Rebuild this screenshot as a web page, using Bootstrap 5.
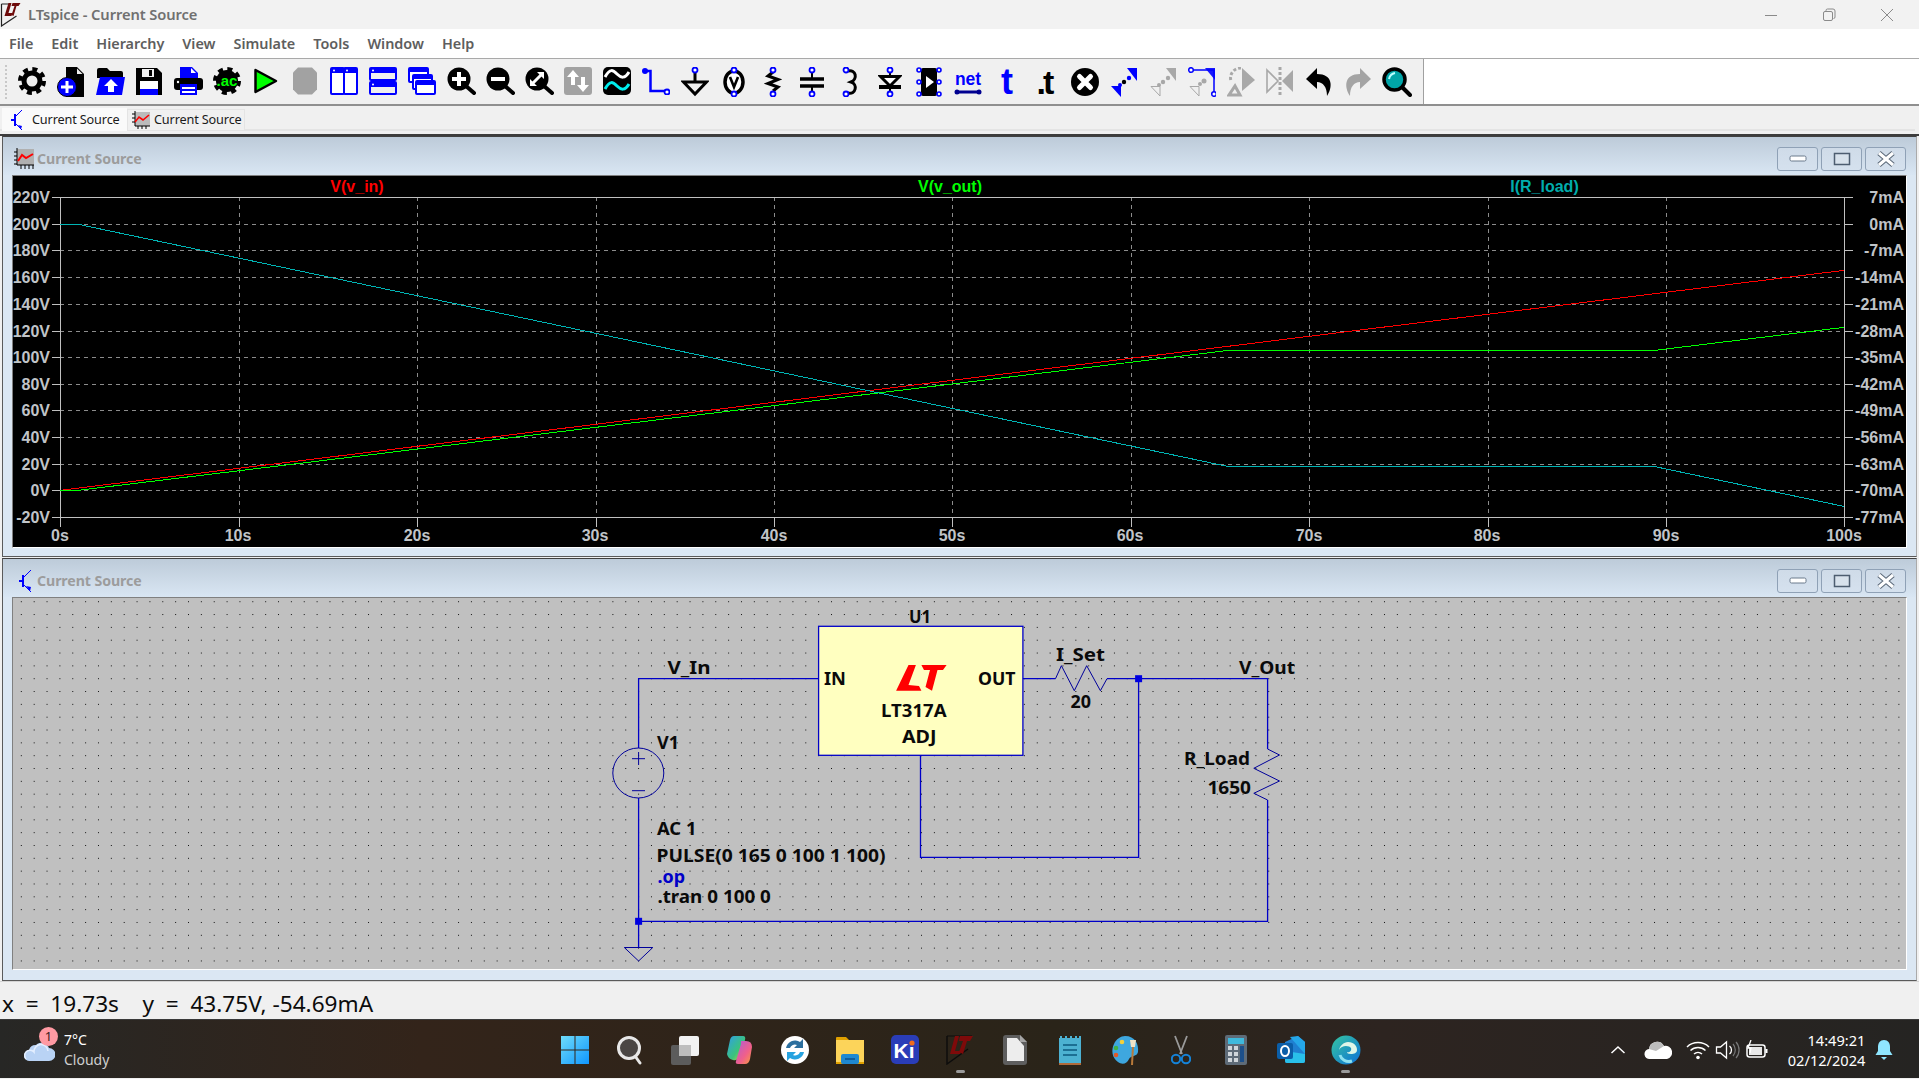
<!DOCTYPE html>
<html lang="en"><head><meta charset="utf-8"><title>LTspice - Current Source</title>
<link href="https://cdn.jsdelivr.net/npm/bootstrap@5.3.0/dist/css/bootstrap.min.css" rel="stylesheet">
<style>
html,body{height:100%;overflow:hidden;margin:0}
body{font-family:"Noto Sans","Liberation Sans",sans-serif;background:#f0f0f0}
.app{width:1919px;height:1079px}
.titlebar{height:29px;background:#f2f2f2;color:#707070;font-size:14.7px;font-weight:600;padding-right:3px}
.titlebar .title{margin-left:7px;letter-spacing:-.1px}
.winctl{width:58px;height:29px}
.menubar{height:30px;background:#fff;border-bottom:1px solid #a9a9a9;padding-left:9px;gap:18px;font-size:14.4px;font-weight:600;color:#5e5e5e}
.toolbar{height:47px;border-bottom:2px solid #8f8f8f;background:#fff}
.tb-inner{width:1424px;height:45px;background:#f0f0f0;border-right:1px solid #a0a0a0;padding-left:12.5px;position:relative}
.grip{width:3px;height:34px;margin-left:-8px;margin-right:5px;border-left:2px dotted #c8c8c8}
.slot{width:39px;height:45px;padding-top:8px;display:flex;justify-content:center;flex:none}
.slot svg{display:block}
.slot svg.tall{margin-top:-6px}
.tabs{height:30px;background:#f0f0f0;border-bottom:2px solid #3c3c3c;padding:2px 0 0 2px;position:relative}
.tabs::after{content:"";position:absolute;left:0;right:4px;bottom:3px;height:2px;background:#e4e4e4}
.tab1,.tab2{font-size:12.7px;color:#1b1b1b;letter-spacing:-.15px;z-index:1;white-space:nowrap}
.tab1{width:125px;background:#fafafa;height:23px}
.tab2{width:118px;background:#f0f0f0;border:1px solid #e4e4e4;margin-top:1px;height:22px}
.mdi{height:845px;background:#f0f0f0;padding:0 2px;gap:1px}
.child{border:1px solid #5a5a5a;border-top-color:#404040;border-right-color:#aaa;background:#dbe7f3}
.child.c1{height:421px}.child.c2{height:423px}
.ctitle{height:38px;background:linear-gradient(180deg,#bdcbd9,#d9e6f3);padding:5px 10px 0 11px;color:#9c9c9c;font-size:14.2px;font-weight:700}
.ctitle .t{margin-left:3px;letter-spacing:-.1px}
.ctitle .t2{margin-left:3px}
.cbtn{width:41px;height:24px;border:1px solid #8fa1b6;border-radius:3px;background:linear-gradient(180deg,#cfdbe8,#d5e1ee);margin-left:3px;flex:none}
.canvasbox{margin-left:9px;margin-right:9px;border-top:1px solid #808080;border-left:1px solid #808080;border-bottom:1px solid #fff;border-right:1px solid #fff}
.canvasbox svg{display:block}
.status{height:38px;background:#f0f0f0;border-top:1px solid #d4d4d4;font-size:22.6px;color:#0c0c0c;padding:6px 0 0 2px;white-space:pre}
.taskbar{height:59px;background:linear-gradient(90deg,#272725,#33241a 22%,#2a2419 55%,#2d2420 72%,#252422);border-top:1px solid #3a3a3a;color:#fff;font-size:13.5px;padding-top:2px}
.wx{width:547px;padding-left:24px;position:relative;flex:none}
.wx .badge1{position:absolute;left:39px;top:-3px;width:19px;height:19px;background:#ff9aa3;color:#3a2020;font-size:13px;font-weight:400;padding:0;line-height:19px}
.wxt{margin-left:9px;line-height:20px;font-size:14px}
.wxt small{display:block;font-size:14px;color:#cfcfcf}
.tk{width:55.1px;display:flex;flex-direction:column;align-items:center;position:relative;flex:none}
.tk .dot{position:absolute;bottom:-8px;width:9px;height:3px;border-radius:2px;background:#9a9a9a}
.tray{margin-left:237px}
.tray .g1{margin-left:18px}.tray .g2{margin-left:13px}.tray .g3{margin-left:4px}.tray .g4{margin-left:4px}
.clock{width:90px;text-align:right;line-height:20px;font-size:14.6px;margin-left:6px;margin-right:10px;white-space:nowrap}
.trace{font:700 16px "Liberation Sans",sans-serif}
.ax{font:700 16px "Liberation Sans",sans-serif;fill:#c0c4c8}
.sch{font:700 17px "Noto Sans","DejaVu Sans",sans-serif;fill:#0a0a0a}
.wire{fill:none;stroke:#0000c8;stroke-width:1.3}
.thin{fill:none;stroke:#00009a;stroke-width:1}
</style></head><body>
<div class="app d-flex flex-column">

<div class="titlebar d-flex align-items-center">
<svg class="ms-0" width="21" height="25" viewBox="0 0 20 25"><path d="M1 2V24L16 14M1 2l9 0" fill="none" stroke="#222" stroke-width="1.2"/><polygon points="8,1 11,1 8,11 12,11 11,14 4,14" fill="#6e0b0b"/><polygon points="12,1 20,1 18,4 16,4 13,14 11,13 14,4 11,4" fill="#6e0b0b"/></svg>
<span class="title">LTspice - Current Source</span>
<div class="ms-auto d-flex">
<div class="winctl d-flex align-items-center justify-content-center"><svg width="14" height="14"><path d="M1 7.5H13" stroke="#8a8a8a"/></svg></div>
<div class="winctl d-flex align-items-center justify-content-center"><svg width="14" height="14"><rect x="1.5" y="3.5" width="9" height="9" rx="1.5" fill="none" stroke="#8a8a8a"/><path d="M4 3V2.5a1.5 1.5 0 0 1 1.500-1.500H11a2 2 0 0 1 2 2V9a1.500 1.500 0 0 1-1.500 1.500" fill="none" stroke="#8a8a8a"/></svg></div>
<div class="winctl d-flex align-items-center justify-content-center"><svg width="14" height="14"><path d="M1 1L13 13M13 1L1 13" stroke="#8a8a8a"/></svg></div>
</div></div>

<nav class="menubar d-flex align-items-center"><span>File</span><span>Edit</span><span>Hierarchy</span><span>View</span><span>Simulate</span><span>Tools</span><span>Window</span><span>Help</span></nav>

<div class="toolbar"><div class="tb-inner d-flex">
<div class="slot" style="width:0;padding-top:6px"><div class="grip"></div></div>
<div class="slot"><svg width="28" height="28" viewBox="0 0 28 28"><circle cx="14" cy="14" r="10.500"/><circle cx="14" cy="14" r="12" fill="none" stroke="#000" stroke-width="4" stroke-dasharray="5 4.420"/><circle cx="14" cy="14" r="5.500" fill="#f0f0f0"/></svg></div>
<div class="slot"><svg width="28" height="30" viewBox="0 0 28 30"><path d="M9 0h11l7 7v23H9z"/><path d="M20 1.500l5.500 5.500H20z" fill="#f0f0f0"/><circle cx="10" cy="20" r="9.500" fill="#00f" stroke="#000"/><path d="M10 14v12M4 20h12" stroke="#fff" stroke-width="3"/></svg></div>
<div class="slot"><svg width="29" height="28" viewBox="0 0 29 28"><path d="M1 3q0-2 2-2h8l3 3h11q2 0 2 2v5H1z"/><path d="M4 10h25l-3 18H0z" fill="#00f"/><path d="M1 8h25" stroke="#000" stroke-width="2"/><path d="M15 12l7 7h-4v6h-6v-6H8z" fill="#fff"/></svg></div>
<div class="slot"><svg width="28" height="28" viewBox="0 0 28 28"><path d="M1 1h21l5 5v22H1z"/><rect x="7" y="2" width="12" height="8" fill="#f0f0f0"/><rect x="14" y="3" width="3" height="6"/><rect x="5" y="14" width="18" height="8" fill="#fff"/><rect x="5" y="22" width="18" height="6" fill="#00f"/></svg></div>
<div class="slot"><svg width="29" height="28" viewBox="0 0 29 28"><path d="M6 0h12l6 6v8H6z" fill="#00f"/><path d="M17 1l5 5h-5z" fill="#fff"/><rect x="0" y="11" width="29" height="12" rx="3"/><circle cx="4" cy="15" r="1.200" fill="#fff"/><rect x="6" y="17" width="17" height="11" fill="#00f"/><path d="M8 21h13M8 25h13" stroke="#fff" stroke-width="1.800"/></svg></div>
<div class="slot"><svg width="28" height="28" viewBox="0 0 28 28"><circle cx="14" cy="14" r="11"/><circle cx="14" cy="14" r="12" fill="none" stroke="#000" stroke-width="4" stroke-dasharray="5 4.420"/><text x="14" y="19" text-anchor="middle" font-family="Liberation Sans" font-weight="700" font-size="15" fill="#0f0">.ac</text></svg></div>
<div class="slot"><svg width="26" height="28" viewBox="0 0 26 28"><path d="M2.500 3L23 14L2.500 25z" fill="#0f0" stroke="#000" stroke-width="2.500" stroke-linejoin="round"/></svg></div>
<div class="slot"><svg width="26" height="28" viewBox="0 0 26 28"><path d="M6 0.500h14l5 5v17l-5 5H6l-5-5v-17z" fill="#a2a2a2"/></svg></div>
<div class="slot"><svg width="28" height="28" viewBox="0 0 28 28"><rect x="1" y="1" width="13" height="26" rx="1" fill="#fff" stroke="#00f" stroke-width="2"/><rect x="14" y="1" width="13" height="26" rx="1" fill="#fff" stroke="#00f" stroke-width="2"/><rect x="1" y="1" width="26" height="5" fill="#00f"/><circle cx="4" cy="3.500" r="1" fill="#fff"/><circle cx="17" cy="3.500" r="1" fill="#fff"/></svg></div>
<div class="slot"><svg width="28" height="28" viewBox="0 0 28 28"><rect x="1" y="1" width="26" height="12" rx="1" fill="#f0f0f0" stroke="#00f" stroke-width="2"/><rect x="1" y="15" width="26" height="12" rx="1" fill="#f0f0f0" stroke="#00f" stroke-width="2"/><rect x="1" y="1" width="26" height="5" fill="#00f"/><rect x="1" y="15" width="26" height="5" fill="#00f"/><circle cx="4" cy="3.500" r="1" fill="#fff"/><circle cx="4" cy="17.500" r="1" fill="#fff"/></svg></div>
<div class="slot"><svg width="28" height="28" viewBox="0 0 28 28"><rect x="1" y="1" width="19" height="14" rx="1" fill="#fff" stroke="#00f" stroke-width="2"/><rect x="1" y="1" width="19" height="4" fill="#00f"/><rect x="5" y="8" width="19" height="14" rx="1" fill="#fff" stroke="#00f" stroke-width="2"/><rect x="5" y="8" width="19" height="4" fill="#00f"/><rect x="8" y="14" width="19" height="13" rx="1" fill="#fff" stroke="#00f" stroke-width="2"/><rect x="8" y="14" width="19" height="4" fill="#00f"/></svg></div>
<div class="slot"><svg width="29" height="28" viewBox="0 0 29 28"><path d="M19 19l8 7" stroke="#000" stroke-width="4" stroke-linecap="round"/><circle cx="12" cy="12" r="11.500"/><path d="M12 5v14M5 12h14" stroke="#fff" stroke-width="4"/></svg></div>
<div class="slot"><svg width="29" height="28" viewBox="0 0 29 28"><path d="M19 19l8 7" stroke="#000" stroke-width="4" stroke-linecap="round"/><circle cx="12" cy="12" r="11.500"/><path d="M5 12h14" stroke="#fff" stroke-width="4"/></svg></div>
<div class="slot"><svg width="29" height="28" viewBox="0 0 29 28"><path d="M19 19l8 7" stroke="#000" stroke-width="4" stroke-linecap="round"/><circle cx="12" cy="12" r="11.500"/><path d="M7 17L17 7" stroke="#fff" stroke-width="3"/><path d="M12 5h7v7zM5 12v7h7z" fill="#fff"/></svg></div>
<div class="slot"><svg width="28" height="28" viewBox="0 0 28 28"><rect width="28" height="28" rx="3" fill="#a2a2a2"/><path d="M9 3l6 7h-4v8H7v-8H3zM19 25l-6-7h4v-8h4v8h4z" fill="#fff"/></svg></div>
<div class="slot"><svg width="28" height="28" viewBox="0 0 28 28"><rect width="28" height="28" rx="5"/><path d="M2 10C7 1 10 3 14 7S22 12 26 5" fill="none" stroke="#fff" stroke-width="3"/><path d="M2 22C7 13 10 15 14 19S22 24 26 17" fill="none" stroke="#0ee" stroke-width="3"/></svg></div>
<div class="slot"><svg width="28" height="28" viewBox="0 0 28 28"><path d="M3 4H8.500V24H24" fill="none" stroke="#00f" stroke-width="2.500"/><circle cx="3" cy="4" r="3" fill="#00f"/><circle cx="25" cy="25" r="2.500" fill="#fff" stroke="#00f" stroke-width="1.800"/></svg></div>
<div class="slot"><svg width="28" height="30" viewBox="0 0 28 30"><path d="M14 5V15" stroke="#000" stroke-width="3"/><path d="M2.500 15H25.500L14 27z" fill="none" stroke="#000" stroke-width="3"/><circle cx="14" cy="3" r="2.500" fill="#fff" stroke="#00f" stroke-width="1.800"/></svg></div>
<div class="slot"><svg width="24" height="30" viewBox="0 0 24 30"><ellipse cx="12" cy="15" rx="9" ry="11" fill="#fff" stroke="#000" stroke-width="3.500"/><path d="M8 10l4 10l4-10" fill="none" stroke="#000" stroke-width="2.600"/><circle cx="12" cy="3" r="2.500" fill="#fff" stroke="#00f" stroke-width="1.800"/><circle cx="12" cy="27" r="2.500" fill="#fff" stroke="#00f" stroke-width="1.800"/></svg></div>
<div class="slot"><svg width="18" height="30" viewBox="0 0 18 30"><path d="M9 5L4 9L14 12.500L4 16.500L14 20L9 24" fill="none" stroke="#000" stroke-width="3"/><circle cx="9" cy="3" r="2.500" fill="#fff" stroke="#00f" stroke-width="1.800"/><circle cx="9" cy="27" r="2.500" fill="#fff" stroke="#00f" stroke-width="1.800"/></svg></div>
<div class="slot"><svg width="28" height="30" viewBox="0 0 28 30"><path d="M2 12H26M2 19H26" stroke="#000" stroke-width="3.500"/><path d="M14 5V12M14 19V25" stroke="#000" stroke-width="2"/><circle cx="14" cy="3" r="2.500" fill="#fff" stroke="#00f" stroke-width="1.800"/><circle cx="14" cy="27" r="2.500" fill="#fff" stroke="#00f" stroke-width="1.800"/></svg></div>
<div class="slot"><svg width="18" height="30" viewBox="0 0 18 30"><path d="M6 4C14 2 16 12 9 15C16 17 14 28 6 26" fill="none" stroke="#000" stroke-width="3"/><circle cx="4" cy="3" r="2.500" fill="#fff" stroke="#00f" stroke-width="1.800"/><circle cx="4" cy="27" r="2.500" fill="#fff" stroke="#00f" stroke-width="1.800"/></svg></div>
<div class="slot"><svg width="24" height="30" viewBox="0 0 24 30"><path d="M12 5V10M12 20V25" stroke="#000" stroke-width="2"/><path d="M2.500 9.500H21.500L12 19z" fill="#fff" stroke="#000" stroke-width="3"/><path d="M1 20H23" stroke="#000" stroke-width="4"/><circle cx="12" cy="3" r="2.500" fill="#fff" stroke="#00f" stroke-width="1.800"/><circle cx="12" cy="27" r="2.500" fill="#fff" stroke="#00f" stroke-width="1.800"/></svg></div>
<div class="slot"><svg width="26" height="30" viewBox="0 0 26 30"><rect x="5" y="1" width="16" height="28" rx="2"/><path d="M10 9L18 15L10 21z" fill="#fff"/><g fill="none" stroke="#00f" stroke-width="1.600"><circle cx="3" cy="3" r="2"/><circle cx="3" cy="15" r="2"/><circle cx="3" cy="27" r="2"/><circle cx="23" cy="3" r="2"/><circle cx="23" cy="15" r="2"/><circle cx="23" cy="27" r="2"/></g></svg></div>
<div class="slot"><svg width="28" height="30" viewBox="0 0 28 30"><text x="14" y="18" text-anchor="middle" font-family="Liberation Sans" font-weight="700" font-size="17.500" fill="#00f">net</text><path d="M3 25H25" stroke="#000090" stroke-width="3"/><circle cx="3" cy="25" r="2.500" fill="#000090"/><circle cx="25" cy="25" r="2.500" fill="#000090"/></svg></div>
<div class="slot"><svg class="tall" width="24" height="42" viewBox="0 0 24 42"><text x="12" y="33" text-anchor="middle" font-family="Liberation Sans" font-weight="700" font-size="36" fill="#00f">t</text></svg></div>
<div class="slot"><svg class="tall" width="30" height="42" viewBox="0 0 30 42"><text x="13" y="33" text-anchor="middle" font-family="Liberation Sans" font-weight="700" font-size="34" letter-spacing="-3" fill="#000">.t</text></svg></div>
<div class="slot"><svg width="30" height="30" viewBox="0 0 30 30"><circle cx="15" cy="15" r="14"/><path d="M9.500 9.500L20.500 20.500M20.500 9.500L9.500 20.500" stroke="#fff" stroke-width="5" stroke-linecap="round"/></svg></div>
<div class="slot"><svg width="28" height="30" viewBox="0 0 28 30"><path d="M27 1V14L17 1z" fill="#00f"/><path d="M1 19H11V30z" fill="#00f"/><circle cx="19" cy="11" r="2.200" fill="#00f"/><circle cx="14" cy="15" r="2.200"/><circle cx="10" cy="18" r="2" fill="#00f"/></svg></div>
<div class="slot"><svg width="28" height="30" viewBox="0 0 28 30"><path d="M27 1V14L17 1z" fill="#a8a8a8"/><path d="M2 19.500H11V29z" fill="none" stroke="#a8a8a8"/><circle cx="19" cy="11" r="2.200" fill="#a8a8a8"/><circle cx="14" cy="15" r="2.200" fill="#a8a8a8"/><circle cx="10" cy="18" r="2" fill="#a8a8a8"/></svg></div>
<div class="slot"><svg width="28" height="30" viewBox="0 0 28 30"><path d="M3 3H26V27" fill="none" stroke="#00f" stroke-width="1.500"/><path d="M27 1V13L17 1z" fill="#00f" opacity=".9"/><circle cx="3" cy="3" r="2.300" fill="#fff" stroke="#00f" stroke-width="1.500"/><circle cx="26" cy="27" r="2.300" fill="#fff" stroke="#00f" stroke-width="1.500"/><path d="M2 19.500H11V29z" fill="none" stroke="#a8a8a8"/><circle cx="16" cy="14" r="2.500" fill="#a8a8a8"/><circle cx="12" cy="17" r="2" fill="#a8a8a8"/></svg></div>
<div class="slot"><svg width="28" height="30" viewBox="0 0 28 30"><path d="M14 1A10 10 0 0 0 4 14" fill="none" stroke="#a8a8a8" stroke-width="3" stroke-dasharray="3 2"/><path d="M15 1L28 13L15 24z" fill="#a8a8a8"/><path d="M2 28L13 28L8 19z" fill="none" stroke="#a8a8a8" stroke-width="3"/></svg></div>
<div class="slot"><svg width="28" height="28" viewBox="0 0 28 28"><path d="M1 3L12 14L1 25z" fill="none" stroke="#a8a8a8" stroke-width="1.600"/><path d="M27 3L16 14L27 25z" fill="#a8a8a8"/><path d="M14 0V28" stroke="#a8a8a8" stroke-width="3" stroke-dasharray="3 2"/></svg></div>
<div class="slot"><svg width="28" height="30" viewBox="0 0 28 30"><path d="M12 1L1 12L12 22V15C18 15 22 20 22 29C28 20 28 7 12 7z"/></svg></div>
<div class="slot"><svg width="28" height="30" viewBox="0 0 28 30"><path d="M16 1L27 12L16 22V15C10 15 6 20 6 29C0 20 0 7 16 7z" fill="#a4a4a4"/></svg></div>
<div class="slot"><svg width="30" height="30" viewBox="0 0 30 30"><path d="M20 20l8 8" stroke="#000" stroke-width="4" stroke-linecap="round"/><circle cx="12.500" cy="12.500" r="10.500" fill="#00a5a8" stroke="#000" stroke-width="3.500"/><path d="M7 12q1-5 6-6" fill="none" stroke="#b8ffff" stroke-width="2"/></svg></div>
</div></div>

<div class="tabs d-flex">
<div class="tab1 d-flex align-items-center"><svg class="ms-2 me-2" width="14" height="22" viewBox="0 0 14 22"><path d="M1 11H5M5 5V17" stroke="#00f" stroke-width="2"/><path d="M5 8L12 1M5 14L12 21" stroke="#00f"/><path d="M8 16l4 1-1 3z" fill="#00f"/></svg>Current Source</div>
<div class="tab2 d-flex align-items-center"><svg class="ms-1" width="18" height="19" viewBox="0 0 18 19"><rect x="3" y="1" width="15" height="14" fill="#bbb"/><path d="M3 0V15H18M0 3h3M0 7h3M0 11h3M6 15v3M10 15v3M14 15v3" stroke="#000" fill="none"/><path d="M3 11L7 6L11 9L17 4" stroke="#f00" stroke-width="1.600" fill="none"/></svg><span class="ms-1">Current Source</span></div>
</div>

<div class="mdi d-flex flex-column">
<section class="child c1 d-flex flex-column">
<div class="ctitle d-flex align-items-center"><svg width="20" height="21" viewBox="0 0 20 21"><rect x="3" y="1" width="17" height="16" fill="#b0b0b0"/><path d="M3 0V17H20M0 4h3M0 8h3M0 12h3M0 16h3M7 17v4M11 17v4M15 17v4M19 17v4" stroke="#000" fill="none"/><path d="M4 13L8 7L12 10L19 6" stroke="#f00" stroke-width="2" fill="none"/></svg>
<span class="t">Current Source</span>
<div class="ms-auto d-flex"><div class="cbtn d-flex align-items-center justify-content-center"><svg width="18" height="8"><rect x="1" y="1" width="16" height="5" rx="1.500" fill="#fff" stroke="#6a7a8c"/></svg></div><div class="cbtn d-flex align-items-center justify-content-center"><svg width="18" height="14"><rect x="1.500" y="1.500" width="15" height="11" fill="#d8e2ec" stroke="#4d5d70" stroke-width="1.500"/></svg></div><div class="cbtn d-flex align-items-center justify-content-center"><svg width="20" height="16"><path d="M3 2L17 14M17 2L3 14" stroke="#5a6878" stroke-width="5"/><path d="M3 2L17 14M17 2L3 14" stroke="#fff" stroke-width="3"/></svg></div></div>
</div>
<div class="canvasbox"><svg width="1893" height="371" viewBox="13 176 1893 371">
<rect x="13" y="176" width="1893" height="371" fill="#000"/>
<g shape-rendering="crispEdges" fill="none">
<path d="M60 224.500H1844M60 250.500H1844M60 277.500H1844M60 304.500H1844M60 331.500H1844M60 357.500H1844M60 384.500H1844M60 410.500H1844M60 437.500H1844M60 464.500H1844M60 490.500H1844M239.500 197V517M417.500 197V517M596.500 197V517M774.500 197V517M952.500 197V517M1131.500 197V517M1309.500 197V517M1488.500 197V517M1666.500 197V517" stroke="#8c8c8c" stroke-dasharray="4 4"/>
<path d="M52 197.500H1853M52 517.500H1853M60.500 197V527M1844.500 197V527M52 224.500H60M52 250.500H60M52 277.500H60M52 304.500H60M52 331.500H60M52 357.500H60M52 384.500H60M52 410.500H60M52 437.500H60M52 464.500H60M52 490.500H60M1845 224.500H1853M1845 250.500H1853M1845 277.500H1853M1845 304.500H1853M1845 331.500H1853M1845 357.500H1853M1845 384.500H1853M1845 410.500H1853M1845 437.500H1853M1845 464.500H1853M1845 490.500H1853M239.500 517V527M417.500 517V527M596.500 517V527M774.500 517V527M952.500 517V527M1131.500 517V527M1309.500 517V527M1488.500 517V527M1666.500 517V527" stroke="#c0c0c0"/>
</g>
<g shape-rendering="crispEdges" fill="none" stroke-width="1">
<polyline points="60.400,490.300 1844.400,270.300" stroke="#f00"/>
<polyline points="60.400,490.300 78.200,490.300 1229,350.300 1655.300,350.300 1844.400,327.300" stroke="#0f0"/>
<polyline points="60.400,224.300 78.200,224.300 1229,466.700 1655.300,466.700 1844.400,506.500" stroke="#00b4b4"/>
</g>
<text class="trace" x="357" y="191.500" text-anchor="middle" fill="#f00">V(v_in)</text>
<text class="trace" x="950" y="191.500" text-anchor="middle" fill="#0f0">V(v_out)</text>
<text class="trace" x="1544.500" y="191.500" text-anchor="middle" fill="#00adad">I(R_load)</text>
<g class="ax" text-anchor="end">
<text class="ax" x="50" y="203">220V</text><text class="ax" x="50" y="230">200V</text><text class="ax" x="50" y="256">180V</text><text class="ax" x="50" y="283">160V</text><text class="ax" x="50" y="310">140V</text><text class="ax" x="50" y="337">120V</text><text class="ax" x="50" y="363">100V</text><text class="ax" x="50" y="390">80V</text><text class="ax" x="50" y="416">60V</text><text class="ax" x="50" y="443">40V</text><text class="ax" x="50" y="470">20V</text><text class="ax" x="50" y="496">0V</text><text class="ax" x="50" y="523">-20V</text>
<text class="ax" x="1904" y="203">7mA</text><text class="ax" x="1904" y="230">0mA</text><text class="ax" x="1904" y="256">-7mA</text><text class="ax" x="1904" y="283">-14mA</text><text class="ax" x="1904" y="310">-21mA</text><text class="ax" x="1904" y="337">-28mA</text><text class="ax" x="1904" y="363">-35mA</text><text class="ax" x="1904" y="390">-42mA</text><text class="ax" x="1904" y="416">-49mA</text><text class="ax" x="1904" y="443">-56mA</text><text class="ax" x="1904" y="470">-63mA</text><text class="ax" x="1904" y="496">-70mA</text><text class="ax" x="1904" y="523">-77mA</text>
</g>
<g text-anchor="middle">
<text class="ax" x="60" y="541">0s</text><text class="ax" x="238" y="541">10s</text><text class="ax" x="417" y="541">20s</text><text class="ax" x="595" y="541">30s</text><text class="ax" x="774" y="541">40s</text><text class="ax" x="952" y="541">50s</text><text class="ax" x="1130" y="541">60s</text><text class="ax" x="1309" y="541">70s</text><text class="ax" x="1487" y="541">80s</text><text class="ax" x="1666" y="541">90s</text><text class="ax" x="1844" y="541">100s</text>
</g>
</svg></div>
</section>

<section class="child c2 d-flex flex-column">
<div class="ctitle d-flex align-items-center"><svg class="ms-1" width="16" height="24" viewBox="0 0 16 24"><path d="M1 12H5M5 6V18" stroke="#00f" stroke-width="2"/><path d="M5 9L13 1M5 15L13 23" stroke="#00f"/><path d="M8 17l5 1-1 4z" fill="#00f"/></svg>
<span class="t t2">Current Source</span>
<div class="ms-auto d-flex"><div class="cbtn d-flex align-items-center justify-content-center"><svg width="18" height="8"><rect x="1" y="1" width="16" height="5" rx="1.500" fill="#fff" stroke="#6a7a8c"/></svg></div><div class="cbtn d-flex align-items-center justify-content-center"><svg width="18" height="14"><rect x="1.500" y="1.500" width="15" height="11" fill="#d8e2ec" stroke="#4d5d70" stroke-width="1.500"/></svg></div><div class="cbtn d-flex align-items-center justify-content-center"><svg width="20" height="16"><path d="M3 2L17 14M17 2L3 14" stroke="#5a6878" stroke-width="5"/><path d="M3 2L17 14M17 2L3 14" stroke="#fff" stroke-width="3"/></svg></div></div>
</div>
<div class="canvasbox"><svg width="1893" height="371" viewBox="13 598 1893 371">
<defs><pattern id="dots" x="638.100" y="678.200" width="12.860" height="12.830" patternUnits="userSpaceOnUse"><rect width="1" height="1" fill="#111"/></pattern></defs>
<rect x="13" y="598" width="1893" height="371" fill="#c0c0c0"/>
<rect x="13" y="598" width="1893" height="371" fill="url(#dots)"/>
<rect x="818.600" y="626.300" width="204.300" height="129" fill="#ffffc0" stroke="#0000c8" stroke-width="1.300"/>
<path class="wire" d="M818.600 678.700H638.600V748M638.600 798V947M638.600 921.300H1267.600V800M1267.600 749V678.700H1107M1055.500 678.700H1022.900M920.500 755.300V857.300H1138.600V678.700"/>
<path class="thin" d="M1055.500 678.700L1061.400 665.700L1074.300 690.700L1086.700 665.700L1100.400 690.700L1107 678.700M1267.600 749L1279.500 755L1253.800 768.300L1279.500 781L1253.800 793.300L1267.600 800M624.300 947.500H652.800L638.600 961z"/>
<ellipse class="thin" cx="638.300" cy="773" rx="25.500" ry="25"/>
<path class="thin" d="M632 758.700H645M638.600 752V765M632 790.700H645"/>
<rect x="635.100" y="917.800" width="7" height="7" fill="#0000e0"/><rect x="1135.100" y="675.200" width="7" height="7" fill="#0000e0"/>
<polygon points="908.500,665 915.900,665 908.500,685 919,686 921.400,690.700 896.100,690.700" fill="#f00"/>
<polygon points="921.400,665 946.600,665 943,670 937.500,670 932,690.700 925.500,687 930,670 924,670" fill="#f00"/>
<text class="sch" x="909" y="622.700" textLength="22" lengthAdjust="spacingAndGlyphs">U1</text>
<text class="sch" x="667.500" y="674" textLength="43" lengthAdjust="spacingAndGlyphs">V_In</text>
<text class="sch" x="824" y="685" textLength="22" lengthAdjust="spacingAndGlyphs">IN</text>
<text class="sch" x="978" y="685" textLength="37.500" lengthAdjust="spacingAndGlyphs">OUT</text>
<text class="sch" x="881" y="716.700" textLength="65.600" lengthAdjust="spacingAndGlyphs">LT317A</text>
<text class="sch" x="902" y="743" textLength="34.500" lengthAdjust="spacingAndGlyphs">ADJ</text>
<text class="sch" x="1056" y="660.700" textLength="49" lengthAdjust="spacingAndGlyphs">I_Set</text>
<text class="sch" x="1070.600" y="707.700" textLength="20.500" lengthAdjust="spacingAndGlyphs">20</text>
<text class="sch" x="1239" y="674" textLength="56" lengthAdjust="spacingAndGlyphs">V_Out</text>
<text class="sch" x="657" y="748.700" textLength="22" lengthAdjust="spacingAndGlyphs">V1</text>
<text class="sch" x="1184" y="765" textLength="66" lengthAdjust="spacingAndGlyphs">R_Load</text>
<text class="sch" x="1207.400" y="793.700" textLength="43.600" lengthAdjust="spacingAndGlyphs">1650</text>
<text class="sch" x="657" y="835" textLength="39.400" lengthAdjust="spacingAndGlyphs">AC 1</text>
<text class="sch" x="656.500" y="862" textLength="229" lengthAdjust="spacingAndGlyphs">PULSE(0 165 0 100 1 100)</text>
<text class="sch" x="657.400" y="882.700" textLength="27.600" lengthAdjust="spacingAndGlyphs" style="fill:#0000c8">.op</text>
<text class="sch" x="657.400" y="902.700" textLength="113.400" lengthAdjust="spacingAndGlyphs">.tran 0 100 0</text>
</svg></div>
</section>
</div>

<footer class="status d-flex align-items-center">x  =  19.73s    y  =  43.75V, -54.69mA</footer>

<div class="taskbar d-flex align-items-center">
<div class="wx d-flex align-items-center">
<svg width="31" height="23" viewBox="0 0 31 23"><path d="M6 22a5.500 5.500 0 0 1-1-11a7 7 0 0 1 7-5a8 8 0 0 1 13 3a6.500 6.500 0 0 1 0 13z" fill="#b9d3f5"/><path d="M2 20a5 5 0 0 1 8-7a7 7 0 0 1 14-1" fill="none" stroke="#e4efff" stroke-width="1.500"/></svg>
<span class="badge1 badge rounded-circle">1</span>
<div class="wxt">7°C<small>Cloudy</small></div>
</div>
<div class="tk"><svg width="30" height="30" viewBox="0 0 30 30"><defs><linearGradient id="wg" x1="0" y1="0" x2="1" y2="1"><stop offset="0" stop-color="#6fdcf9"/><stop offset="1" stop-color="#0f96ff"/></linearGradient></defs><path d="M1 1h13.500v13.500H1zM15.500 1H29v13.500H15.500zM1 15.500h13.500V29H1zM15.500 15.500H29V29H15.500z" fill="url(#wg)"/></svg></div>
<div class="tk"><svg width="28" height="30" viewBox="0 0 28 30"><path d="M19 21l5 7" stroke="#e8e8e8" stroke-width="3" stroke-linecap="round"/><circle cx="13" cy="13" r="10.500" fill="#4a4644" stroke="#e8e8e8" stroke-width="3"/></svg></div>
<div class="tk"><svg width="30" height="30" viewBox="0 0 30 30"><rect x="1" y="10" width="20" height="20" rx="2" fill="#5c5c5c"/><rect x="9" y="1" width="20" height="20" rx="2" fill="#f2f2f2"/><rect x="9" y="10" width="12" height="11" fill="#bdbdbd"/></svg></div>
<div class="tk"><svg width="30" height="30" viewBox="0 0 30 30"><defs><linearGradient id="c1" x1="0" y1="0" x2="1" y2="1"><stop offset="0" stop-color="#2f9ee8"/><stop offset=".6" stop-color="#3bc47a"/><stop offset="1" stop-color="#e8d33c"/></linearGradient><linearGradient id="c2" x1="0" y1="0" x2="1" y2="1"><stop offset="0" stop-color="#b05bd8"/><stop offset=".6" stop-color="#f0608a"/><stop offset="1" stop-color="#f79d3c"/></linearGradient></defs><path d="M9 1h9q3 0 2 4l-6 17q-2 4-6 3Q3 24 2 19L5 5q1-4 4-4z" fill="url(#c1)"/><path d="M16 6h5q6 0 6 6l-2 12q-1 5-5 5h-7q-3 0-2-3l5-17q0-3 0-3z" fill="url(#c2)"/></svg></div>
<div class="tk"><svg width="30" height="30" viewBox="0 0 30 30"><circle cx="15" cy="15" r="14" fill="#fff"/><path d="M6 13a9 9 0 0 1 14-6l3-3v9h-9l3-3a5 5 0 0 0-7 3z" fill="#2c6f9e"/><path d="M24 17a9 9 0 0 1-14 6l-3 3v-9h9l-3 3a5 5 0 0 0 7-3z" fill="#27a3e0"/></svg></div>
<div class="tk"><svg width="30" height="30" viewBox="0 0 30 30"><path d="M1 3q0-1 1-1h9l3 3H1z" fill="#e0a000"/><rect x="1" y="5" width="28" height="24" fill="#fcd45a"/><rect x="1" y="27" width="28" height="2" fill="#e0a000"/><rect x="6" y="19" width="18" height="10" rx="2" fill="#1f88d0"/><path d="M10 24h10" stroke="#0d4f8a" stroke-width="1.500"/></svg></div>
<div class="tk"><svg width="28" height="30" viewBox="0 0 28 30"><rect width="28" height="29" rx="5" fill="#2a3db8"/><text x="13" y="23" text-anchor="middle" font-family="Liberation Sans" font-weight="700" font-size="21" fill="#fff">Ki</text><circle cx="21" cy="8" r="2.600" fill="#f26a1b"/></svg></div>
<div class="tk"><svg width="28" height="30" viewBox="0 0 28 30"><path d="M1 1V29L22 14" fill="none" stroke="#0c0c0c" stroke-width="1.400"/><path d="M1 1H26" stroke="#0c0c0c"/><polygon points="9,1 13,1 9,16 15,16 14,19 4,19" fill="#7e0a0a"/><polygon points="14,1 27,1 24,6 21,6 17,19 13,17 17,6 13,6" fill="#7e0a0a"/></svg><span class="dot"></span></div>
<div class="tk"><svg width="24" height="30" viewBox="0 0 24 30"><path d="M3 0h14l7 7v20q0 3-3 3H3q-3 0-3-3V3q0-3 3-3z" fill="#5e5e5e"/><path d="M4 3h10l7 8v15H4z" fill="#ededed"/><path d="M17 0l7 7h-7z" fill="#a6a6a6"/></svg></div>
<div class="tk"><svg width="24" height="30" viewBox="0 0 24 30"><rect x="1" y="3" width="22" height="25" fill="#4cb1d2"/><path d="M1 28h22v2H1z" fill="#b06a3a"/><path d="M3 3V1M8 3V1M13 3V1M18 3V1M22 3V1" stroke="#4cb1d2" stroke-width="2"/><path d="M5 10h14M5 15h14M5 20h14" stroke="#1c6f94" stroke-width="2"/></svg></div>
<div class="tk"><svg width="28" height="30" viewBox="0 0 28 30"><path d="M14 1C24 1 28 9 27 17C26 22 20 20 18 24C16 29 11 30 7 27C1 23 0 15 3 9C5 4 10 1 14 1z" fill="#3ea7df"/><circle cx="11" cy="7" r="2.300" fill="#f4d03a"/><circle cx="5" cy="13" r="2.300" fill="#3fb34a"/><circle cx="5" cy="20" r="2.300" fill="#e05a2b"/><path d="M22 11L21 30" stroke="#b97a3a" stroke-width="2"/><path d="M19 5h6l-1 7h-4z" fill="#efe2c6"/></svg></div>
<div class="tk"><svg width="20" height="30" viewBox="0 0 20 30"><path d="M4 1L11 19M16 1L9 19" stroke="#9a9a9a" stroke-width="1.800"/><circle cx="5" cy="24" r="4.200" fill="none" stroke="#1583d8" stroke-width="2"/><circle cx="15" cy="24" r="4.200" fill="none" stroke="#1583d8" stroke-width="2"/></svg></div>
<div class="tk"><svg width="24" height="30" viewBox="0 0 24 30"><rect x="1" y="0" width="22" height="30" rx="2" fill="#5e6b78"/><rect x="4" y="3" width="16" height="6" fill="#3fb9dc"/><path d="M4 11h4v4H4zM10 11h4v4h-4zM4 17h4v4H4zM10 17h4v4h-4zM4 23h4v4H4zM10 23h4v4h-4z" fill="#cfd5da"/><rect x="16" y="11" width="4" height="16" fill="#1c4f8a"/></svg></div>
<div class="tk"><svg width="30" height="30" viewBox="0 0 30 30"><path d="M9 7L22 1l7 6v19q0 2-2 2H11q-2 0-2-2z" fill="#1f7fd0"/><path d="M14 2l8-1l7 6v12z" fill="#25a6e8"/><path d="M9 16l20 3v7q0 2-2 2H11q-2 0-2-2z" fill="#29c0ea"/><rect x="1" y="8" width="16" height="16" rx="2" fill="#0b5ea8"/><ellipse cx="9" cy="16" rx="4" ry="5" fill="none" stroke="#fff" stroke-width="2"/></svg></div>
<div class="tk"><svg width="30" height="30" viewBox="0 0 30 30"><defs><linearGradient id="e1" x1="0" y1="0" x2="1" y2="1"><stop offset="0" stop-color="#36c6a0"/><stop offset="1" stop-color="#0c6fd8"/></linearGradient></defs><circle cx="15" cy="15" r="14.500" fill="url(#e1)"/><path d="M8 16c0-5 5-9 9-9c6 0 9 4 9 8c0 3-3 4-6 4c-3 0-4-1-4-2c2 1 5-1 4-4c-1-2-6-3-9-1C9 13 8 14 8 16z" fill="#dff6e8"/><path d="M9 20c1 4 6 8 12 6" fill="none" stroke="#8ce0f0" stroke-width="3"/></svg><span class="dot"></span></div>
<div class="tray d-flex align-items-center">
<svg width="16" height="10" viewBox="0 0 16 10"><path d="M1.500 8L8 2l6.500 6" fill="none" stroke="#fff" stroke-width="1.500"/></svg>
<svg class="g1" width="28" height="20" viewBox="0 0 28 20"><path d="M6 19a5 5 0 0 1-1-10a8 8 0 0 1 15-3a6 6 0 0 1 3 13z" fill="#fff"/><path d="M5 9a8 8 0 0 1 15-3l-8 5z" fill="#bdbdbd"/></svg>
<svg class="g2" width="26" height="20" viewBox="0 0 26 20"><path d="M2 7a16 16 0 0 1 22 0M5.500 10.500a11 11 0 0 1 15 0M9 14a6 6 0 0 1 8 0" fill="none" stroke="#fff" stroke-width="1.500"/><circle cx="13" cy="17.500" r="1.800" fill="#fff"/></svg>
<svg class="g3" width="26" height="20" viewBox="0 0 26 20"><path d="M1.500 7h4l6-5v16l-6-5h-4z" fill="none" stroke="#fff" stroke-width="1.300"/><path d="M14.500 6a5 5 0 0 1 0 8" fill="none" stroke="#fff" stroke-width="1.300"/><path d="M18 4a9 9 0 0 1 0 12M21 2a12 12 0 0 1 0 16" fill="none" stroke="#777" stroke-width="1.200"/></svg>
<svg class="g4" width="24" height="20" viewBox="0 0 24 20"><rect x="2" y="5" width="18" height="12" rx="2.500" fill="none" stroke="#fff" stroke-width="1.500"/><rect x="4" y="7" width="13" height="8" fill="#e8e8e8"/><path d="M20.500 9h2v4h-2z" fill="#fff"/><path d="M6 0L3 8h3L5 13" fill="none" stroke="#fff" stroke-width="1.300"/></svg>
<div class="clock">14:49:21<br>02/12/2024</div>
<svg width="18" height="22" viewBox="0 0 18 22"><path d="M9 1c4 0 6 3 6 7v4l2.500 4H.5L3 12V8c0-4 2-7 6-7z" fill="#8fe6ff"/><path d="M6 18h6l-3 3z" fill="#8fe6ff"/></svg>
</div>
</div>
</div>
</body></html>
